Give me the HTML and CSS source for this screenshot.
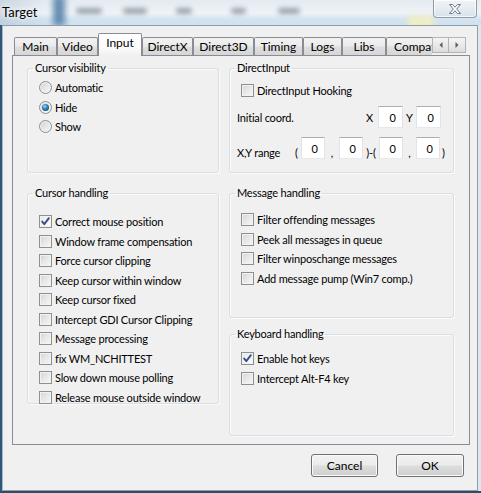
FILE: index.html
```html
<!DOCTYPE html>
<html lang="en">
<head>
<meta charset="utf-8">
<title>Target</title>
<link rel="stylesheet" href="styles.css">
</head>
<body>
<div class="window">
  <header class="titlebar">
    <div class="glass" aria-hidden="true">
      <span class="streak"></span>
      <span class="smudge s1"></span>
      <span class="smudge s2"></span>
      <span class="smudge s3"></span>
      <span class="smudge s4"></span>
      <span class="smudge s5"></span>
      <span class="warm"></span>
    </div>
    <span class="title">Target</span>
    <button class="close" type="button" aria-label="Close">
      <svg width="14" height="10" viewBox="0 0 14 10">
        <path d="M1.5 0.5 H4.5 L7 3.2 L9.5 0.5 H12.5 L8.7 5 L12.5 9.5 H9.5 L7 6.8 L4.5 9.5 H1.5 L5.3 5 Z" fill="#fbfcfd" stroke="#6d7c8c" stroke-width="1" stroke-linejoin="round"/>
      </svg>
    </button>
  </header>

  <div class="frame">
    <div class="client">
      <div class="tabrow">
        <div class="tabstrip">
          <span class="tab">Main</span>
          <span class="tab">Video</span>
          <span class="tab active">Input</span>
          <span class="tab">DirectX</span>
          <span class="tab">Direct3D</span>
          <span class="tab">Timing</span>
          <span class="tab">Logs</span>
          <span class="tab">Libs</span>
          <span class="tab">Compat.</span>
        </div>
        <div class="spin">
          <span class="spin-btn"><svg width="4" height="6" viewBox="0 0 4 6"><path d="M3.5 0 V6 L0.5 3 Z" fill="#5c5c5c"/></svg></span>
          <span class="spin-btn"><svg width="4" height="6" viewBox="0 0 4 6"><path d="M0.5 0 V6 L3.5 3 Z" fill="#5c5c5c"/></svg></span>
        </div>
      </div>

      <section class="panel">
        <div class="column">
          <fieldset class="group g-visibility">
            <legend>Cursor visibility</legend>
            <div class="items">
              <label class="opt"><span class="radio"></span>Automatic</label>
              <label class="opt"><span class="radio on"></span>Hide</label>
              <label class="opt"><span class="radio"></span>Show</label>
            </div>
          </fieldset>

          <fieldset class="group g-cursor">
            <legend>Cursor handling</legend>
            <div class="items">
              <label class="opt"><span class="box on"><svg width="11" height="11" viewBox="0 0 11 11"><path d="M2.2 5.6 L4.3 8.2 L8.9 2.2" fill="none" stroke="#3b4f84" stroke-width="1.9" stroke-linecap="round" stroke-linejoin="round"/></svg></span>Correct mouse position</label>
              <label class="opt"><span class="box"></span>Window frame compensation</label>
              <label class="opt"><span class="box"></span>Force cursor clipping</label>
              <label class="opt"><span class="box"></span>Keep cursor within window</label>
              <label class="opt"><span class="box"></span>Keep cursor fixed</label>
              <label class="opt"><span class="box"></span>Intercept GDI Cursor Clipping</label>
              <label class="opt"><span class="box"></span>Message processing</label>
              <label class="opt"><span class="box"></span>fix WM_NCHITTEST</label>
              <label class="opt"><span class="box"></span>Slow down mouse polling</label>
              <label class="opt"><span class="box"></span>Release mouse outside window</label>
            </div>
          </fieldset>
        </div>

        <div class="column">
          <fieldset class="group g-dinput">
            <legend>DirectInput</legend>
            <div class="items">
              <label class="opt hook"><span class="box"></span>DirectInput Hooking</label>
              <div class="coord-row">
                <span class="t lbl-init">Initial coord.</span>
                <span class="t axis">X</span>
                <input class="num w25" type="text" value="0" readonly>
                <span class="t axis ax-y">Y</span>
                <input class="num w25" type="text" value="0" readonly>
              </div>
              <div class="coord-row range">
                <span class="t lbl-range">X,Y range</span>
                <span class="t paren">(</span>
                <input class="num w24" type="text" value="0" readonly>
                <span class="t sep">,</span>
                <input class="num w24" type="text" value="0" readonly>
                <span class="t dash">)-(</span>
                <input class="num w24" type="text" value="0" readonly>
                <span class="t sep sep2">,</span>
                <input class="num w24" type="text" value="0" readonly>
                <span class="t close-paren">)</span>
              </div>
            </div>
          </fieldset>

          <fieldset class="group g-message">
            <legend>Message handling</legend>
            <div class="items">
              <label class="opt"><span class="box"></span>Filter offending messages</label>
              <label class="opt"><span class="box"></span>Peek all messages in queue</label>
              <label class="opt"><span class="box"></span>Filter winposchange messages</label>
              <label class="opt"><span class="box"></span>Add message pump (Win7 comp.)</label>
            </div>
          </fieldset>

          <fieldset class="group g-keyboard">
            <legend>Keyboard handling</legend>
            <div class="items">
              <label class="opt"><span class="box on"><svg width="11" height="11" viewBox="0 0 11 11"><path d="M2.2 5.6 L4.3 8.2 L8.9 2.2" fill="none" stroke="#3b4f84" stroke-width="1.9" stroke-linecap="round" stroke-linejoin="round"/></svg></span>Enable hot keys</label>
              <label class="opt"><span class="box"></span>Intercept Alt-F4 key</label>
            </div>
          </fieldset>
        </div>
      </section>

      <footer class="buttons">
        <button class="btn" type="button">Cancel</button>
        <button class="btn" type="button">OK</button>
      </footer>
    </div>
  </div>
</div>
</body>
</html>
```

FILE: styles.css
```css
* {
  box-sizing: border-box;
}

html,
body {
  margin: 0;
  padding: 0;
}

body {
  width: 481px;
  height: 493px;
  overflow: hidden;
  font-family: Lato, "Noto Sans", sans-serif;
  font-size: 12px;
  color: #000;
  background: #dfe8ef;
}

/* ---------- window shell ---------- */

.window {
  width: 481px;
  height: 493px;
  display: flex;
  flex-direction: column;
}

.titlebar {
  position: relative;
  height: 25px;
  flex: none;
  display: flex;
  justify-content: space-between;
  align-items: flex-start;
  overflow: hidden;
  background:
    linear-gradient(90deg, rgba(170, 188, 204, 0.45) 0, rgba(170, 188, 204, 0) 48px),
    linear-gradient(180deg, #e4ebf1 0%, #eef3f7 52%, #d3e3f0 78%, #cfe1ef 100%);
}

/* blurred desktop showing through the glass caption */
.glass {
  position: absolute;
  inset: 0;
  pointer-events: none;
}

.streak {
  position: absolute;
  left: 53px;
  top: -4px;
  width: 12px;
  height: 30px;
  background: #4d7ba6;
  filter: blur(3px);
  opacity: 0.85;
}

.smudge {
  position: absolute;
  top: 8px;
  height: 6px;
  background: #7f8a93;
  border-radius: 3px;
  filter: blur(2.5px);
  opacity: 0.75;
}

.s1 { left: 76px; width: 26px; }
.s2 { left: 123px; width: 24px; }
.s3 { left: 176px; width: 16px; }
.s4 { left: 231px; width: 15px; }
.s5 { left: 278px; width: 22px; }

.warm {
  position: absolute;
  left: 408px;
  top: 16px;
  width: 26px;
  height: 12px;
  background: #f3edc2;
  filter: blur(3px);
}

.title {
  position: relative;
  margin: 4px 0 0 2px;
  font-size: 13px;
  line-height: 16px;
  color: #000;
  text-shadow: 0 0 5px #fff, 0 0 8px #fff;
}

.close {
  position: relative;
  width: 44px;
  height: 18px;
  margin: 0 4px 0 0;
  padding: 0;
  display: flex;
  align-items: center;
  justify-content: center;
  border: 1px solid #8e9cab;
  border-top: none;
  border-radius: 0 0 4px 4px;
  background: linear-gradient(180deg, #f1f4f7 0%, #e6ecf1 50%, #d9e2ea 100%);
  box-shadow: inset 0 0 0 1px rgba(255, 255, 255, 0.7);
}

.frame {
  flex: 1;
  display: flex;
  border-left: 2px solid #2e587b;
  border-bottom: 2px solid #2f4d66;
  padding-right: 3px;
  background: #dde7ef;
}

.client {
  flex: 1;
  display: flex;
  flex-direction: column;
  border: 1px solid #8f9daa;
  border-left-color: #a9b7c4;
  background: #f0f0f0;
  padding: 7px 0 0 9px;
}

/* ---------- tabs ---------- */

.tabrow {
  width: 458px;
  height: 22px;
  display: flex;
  align-items: flex-end;
  padding-left: 2px;
}

.tabstrip {
  position: relative;
  z-index: 1;
  width: 418px;
  height: 23px;
  margin-bottom: -1px;
  display: flex;
  align-items: flex-end;
  overflow: hidden;
}

.tab {
  flex: none;
  height: 18px;
  margin-bottom: 1px;
  border: 1px solid #898c95;
  border-bottom: none;
  border-radius: 2px 2px 0 0;
  background: linear-gradient(180deg, #f2f2f2 0%, #ebebeb 45%, #dedede 55%, #d6d6d6 100%);
  text-align: center;
  line-height: 17px;
  white-space: nowrap;
  overflow: hidden;
}

.tab:nth-child(1) { width: 43px; }
.tab:nth-child(2) { width: 41px; }
.tab:nth-child(3) { width: 44px; }
.tab:nth-child(4) { width: 51px; }
.tab:nth-child(5) { width: 61px; }
.tab:nth-child(6) { width: 49px; }
.tab:nth-child(7) { width: 39px; }
.tab:nth-child(8) { width: 44px; }
.tab:nth-child(9) { width: 56px; text-align: left; padding-left: 7px; }

.tab.active {
  height: 23px;
  margin-bottom: 0;
  background: linear-gradient(180deg, #ffffff 0%, #fbfbfb 60%, #f0f0f0 100%);
  line-height: 17px;
  padding-bottom: 5px;
}

.spin {
  display: flex;
  margin-bottom: 2px;
}

.spin-btn {
  width: 17px;
  height: 16px;
  display: flex;
  align-items: center;
  justify-content: center;
  border: 1px solid #b4b4b4;
  background: linear-gradient(180deg, #f4f4f4 0%, #e9e9e9 50%, #dcdcdc 100%);
}

.spin-btn + .spin-btn {
  border-left: none;
}

/* ---------- tab page ---------- */

.panel {
  width: 458px;
  height: 390px;
  display: flex;
  gap: 10px;
  padding: 5px 15px 0 14px;
  border: 1px solid #898c95;
  background: #f0f0f0;
  font-size: 11px;
  letter-spacing: -0.2px;
}

.column {
  display: flex;
  flex-direction: column;
}

.column:first-child {
  width: 192px;
}

.column:last-child {
  width: 225px;
}

.group {
  margin: 0;
  padding: 0;
  min-width: 0;
  border: 1px solid #d5dfe5;
  border-radius: 3px;
  box-shadow: inset 1px 1px 0 #fbfbfb, 1px 1px 0 #fbfbfb;
}

.group legend {
  margin-left: 5px;
  padding: 0 2px;
  line-height: 14px;
}

.g-visibility { height: 112px; }
.g-cursor { height: 218px; margin-top: 13px; }
.g-dinput { height: 112px; }
.g-message { height: 132px; margin-top: 13px; }
.g-keyboard { height: 109px; margin-top: 9px; }

.items {
  display: flex;
  flex-direction: column;
  padding-left: 11px;
}

.g-visibility .items { padding-top: 3px; }
.g-cursor .items { padding-top: 12px; }
.g-message .items { padding-top: 10px; }
.g-keyboard .items { padding-top: 8px; }
.g-dinput .items { padding: 5px 0 0 7px; }

.opt {
  height: 19.5px;
  display: flex;
  align-items: center;
  gap: 3px;
  white-space: nowrap;
}

.opt.hook {
  height: 20px;
  padding-left: 4px;
}

/* check boxes */
.box {
  flex: none;
  width: 13px;
  height: 13px;
  display: flex;
  align-items: center;
  justify-content: center;
  border: 1px solid #8e8f8f;
  background: linear-gradient(135deg, #d3d3d3 0%, #e6e6e6 45%, #f7f7f7 100%);
  box-shadow: inset 0 0 0 1px #f2f2f2;
}

.box.on {
  background: linear-gradient(135deg, #e4e6ea 0%, #f3f4f6 50%, #fdfdfd 100%);
}

/* radio buttons */
.radio {
  flex: none;
  width: 13px;
  height: 13px;
  border: 1px solid #8e8f8f;
  border-radius: 50%;
  background: linear-gradient(135deg, #cfcfcf 0%, #e4e4e4 45%, #f8f8f8 100%);
  box-shadow: inset 0 0 0 1px #f1f1f1;
  display: flex;
  align-items: center;
  justify-content: center;
}

.radio.on::after {
  content: "";
  width: 7px;
  height: 7px;
  border-radius: 50%;
  background: radial-gradient(circle at 40% 35%, #a7dcf5 0%, #3a8cc0 35%, #145e8f 70%, #0d3f66 100%);
}

/* coordinate rows */
.coord-row {
  display: flex;
  align-items: center;
  height: 22px;
  margin-top: 6px;
  white-space: nowrap;
}

.coord-row.range {
  margin-top: 9px;
}

.range .t {
  margin-top: 8px;
}

.lbl-init { width: 129px; }
.axis { width: 12px; }
.ax-y { width: 13px; padding-left: 3px; }
.lbl-range { width: 58px; }
.paren { width: 6px; }
.sep { width: 14px; text-align: center; }
.sep2 { width: 13px; }
.dash { width: 16px; text-align: center; }
.close-paren { padding-left: 2px; }

.num {
  height: 22px;
  margin: 0;
  padding: 0 6px 0 0;
  font: inherit;
  color: #000;
  text-align: right;
  background: #fff;
  border: 1px solid #e2e3ea;
  border-top-color: #abadb3;
  border-bottom-color: #e3e9ef;
  outline: none;
}

.w25 { width: 25px; }
.w24 { width: 24px; }

/* ---------- dialog buttons ---------- */

.buttons {
  display: flex;
  justify-content: flex-end;
  gap: 18px;
  margin-top: 9px;
  padding-right: 13px;
}

.btn {
  width: 67px;
  height: 23px;
  margin: 0;
  padding: 0;
  font: inherit;
  color: #000;
  border: 1px solid #707070;
  border-radius: 3px;
  background: linear-gradient(180deg, #f2f2f2 0%, #ebebeb 48%, #dddddd 52%, #cfcfcf 100%);
  box-shadow: inset 0 0 0 1px #fbfbfb;
}

.btn:last-child {
  width: 68px;
}
```
